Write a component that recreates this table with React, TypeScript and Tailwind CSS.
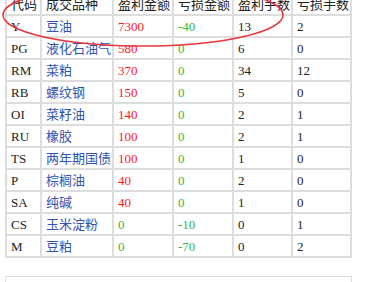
import React from "react";

type Row = { code: string; name: string; win: string; loss: string; wn: string; ln: string };

const rows: Row[] = [
  { code: "Y", name: "豆油", win: "7300", loss: "-40", wn: "13", ln: "2" },
  { code: "PG", name: "液化石油气", win: "580", loss: "0", wn: "6", ln: "0" },
  { code: "RM", name: "菜粕", win: "370", loss: "0", wn: "34", ln: "12" },
  { code: "RB", name: "螺纹钢", win: "150", loss: "0", wn: "5", ln: "0" },
  { code: "OI", name: "菜籽油", win: "140", loss: "0", wn: "2", ln: "1" },
  { code: "RU", name: "橡胶", win: "100", loss: "0", wn: "2", ln: "1" },
  { code: "TS", name: "两年期国债", win: "100", loss: "0", wn: "1", ln: "0" },
  { code: "P", name: "棕榈油", win: "40", loss: "0", wn: "2", ln: "0" },
  { code: "SA", name: "纯碱", win: "40", loss: "0", wn: "1", ln: "0" },
  { code: "CS", name: "玉米淀粉", win: "0", loss: "-10", wn: "0", ln: "1" },
  { code: "M", name: "豆粕", win: "0", loss: "-70", wn: "0", ln: "2" },
];

const td = "border border-[#dddddd] h-[22px] px-[4px] py-0 align-middle whitespace-nowrap";

export default function App() {
  const winColor = (v: string) => (v === "0" ? "text-[#33bb33]" : "text-[#ff1a1a]");
  return (
    <div
      className="relative w-[380px] h-[282px] overflow-hidden bg-white text-[13px] leading-none text-[#222222]"
      style={{ fontFamily: '"Liberation Serif", "Noto Sans CJK SC", serif' }}
    >
      <div className="-mt-[8px] pl-[5px]">
        <table className="border-separate border-spacing-0 border border-[#dddddd] table-fixed w-[347px]">
          <colgroup>
            <col className="w-[35px]" />
            <col className="w-[72px]" />
            <col className="w-[60px]" />
            <col className="w-[60px]" />
            <col className="w-[59px]" />
            <col className="w-[59px]" />
          </colgroup>
          <thead>
            <tr>
              <th className={td + " text-left font-normal"}>代码</th>
              <th className={td + " text-left font-normal"}>成交品种</th>
              <th className={td + " text-left font-normal"}>盈利金额</th>
              <th className={td + " text-left font-normal"}>亏损金额</th>
              <th className={td + " text-left font-normal"}>盈利手数</th>
              <th className={td + " text-left font-normal"}>亏损手数</th>
            </tr>
          </thead>
          <tbody>
            {rows.map((r) => (
              <tr key={r.code}>
                <td className={td}>{r.code}</td>
                <td className={td + " text-[#2f55b0]"}>{r.name}</td>
                <td className={td + " " + winColor(r.win)}>{r.win}</td>
                <td className={td + " text-[#33bb33]"}>{r.loss}</td>
                <td className={td}>{r.wn}</td>
                <td className={td}>{r.ln}</td>
              </tr>
            ))}
          </tbody>
        </table>
        <div className="mt-[18px] w-[347px] h-[40px] border border-[#dddddd] border-b-0" />
      </div>
      <svg
        className="absolute left-0 top-0 pointer-events-none"
        width="380"
        height="282"
        viewBox="0 0 380 282"
      >
        <ellipse cx="143" cy="15" rx="140" ry="31" fill="none" stroke="#e8343a" strokeWidth="1.5" />
      </svg>
    </div>
  );
}
